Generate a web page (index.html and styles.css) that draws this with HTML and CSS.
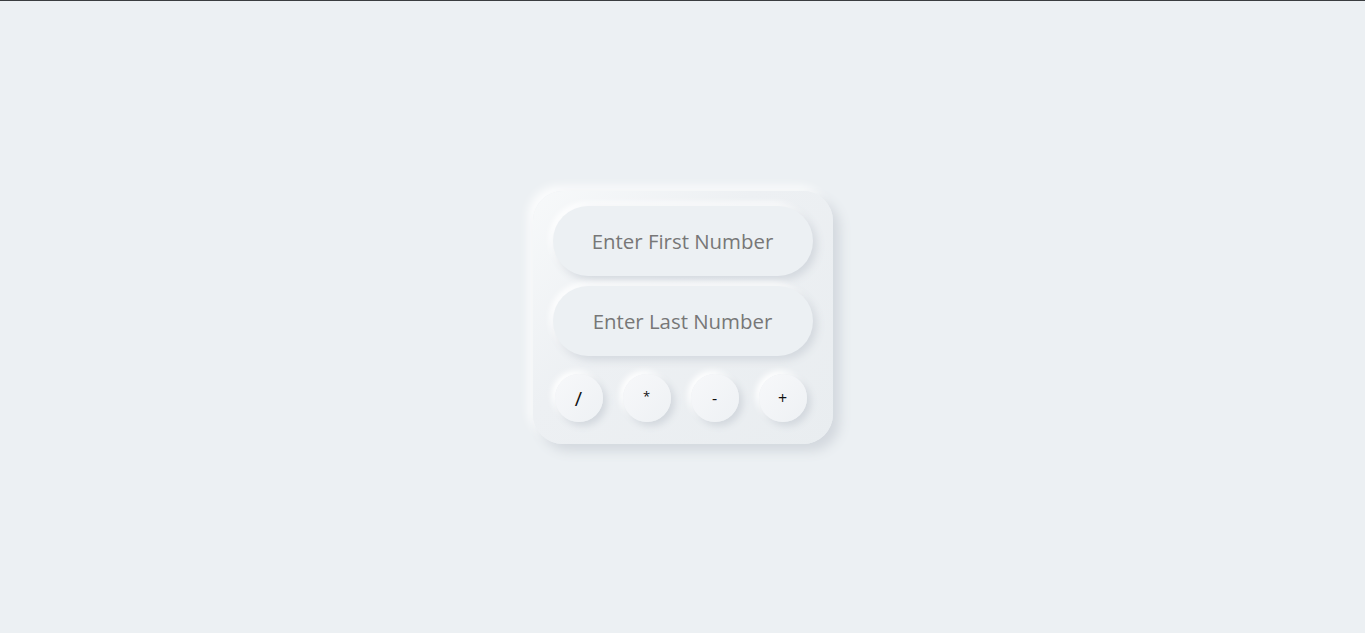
FILE: index.html
```html
<!DOCTYPE html>
<html>
<head>
<meta charset="utf-8">
<link rel="stylesheet" href="styles.css">
</head>
<body>
<div class="topline"></div>
<main class="stage">
  <div class="card">
    <input class="field" type="text" placeholder="Enter First Number">
    <input class="field" type="text" placeholder="Enter Last Number">
    <div class="ops">
      <button class="op op-slash">/</button>
      <button class="op op-star">*</button>
      <button class="op op-minus">-</button>
      <button class="op op-plus">+</button>
    </div>
  </div>
</main>
</body>
</html>
```
FILE: styles.css
```css
html, body {
  margin: 0;
  padding: 0;
  height: 100%;
}
body {
  background: #ecf0f3;
  font-family: "Open Sans", "Noto Sans", sans-serif;
  display: flex;
  flex-direction: column;
  overflow: hidden;
}
.topline {
  height: 1px;
  background: #3a3d40;
  flex: none;
}
.stage {
  flex: 1;
  display: flex;
  justify-content: center;
  align-items: flex-start;
  padding-top: 190px;
}
.card {
  width: 300px;
  box-sizing: border-box;
  padding: 15px 20px 22px 20px;
  border-radius: 30px;
  background: linear-gradient(135deg, #f7f9fa 0%, #edf0f3 40%, #e9edf0 100%);
  box-shadow: 7px 7px 12px #d3d8de, -5px -5px 10px rgba(255, 255, 255, 0.8);
  display: flex;
  flex-direction: column;
  gap: 10px;
}
.field {
  display: block;
  width: 260px;
  height: 70px;
  box-sizing: border-box;
  border: none;
  outline: none;
  border-radius: 35px;
  background: #ecf0f3;
  box-shadow: 4px 4px 8px #d3d8de, -3px -3px 6px #ffffff;
  text-align: center;
  font-family: "Open Sans", "Noto Sans", sans-serif;
  font-size: 20.4px;
  color: #777777;
  padding: 0 6px;
}
.field::placeholder {
  color: #777777;
}
.ops {
  display: flex;
  gap: 20px;
  padding: 8px 0 0 2px;
}
.op {
  flex: none;
  width: 48px;
  height: 48px;
  border-radius: 50%;
  border: none;
  padding: 0;
  background: linear-gradient(135deg, #f7f8fa 0%, #eef1f4 100%);
  box-shadow: 4px 4px 7px #d3d8de, -3px -3px 6px #ffffff;
  font-family: "Open Sans", "Noto Sans", sans-serif;
  color: #111;
  font-size: 16px;
  display: flex;
  align-items: center;
  justify-content: center;
}
.op-slash {
  font-size: 20px;
}
.op-star {
  font-size: 13px;
  padding-bottom: 5px;
}
```
